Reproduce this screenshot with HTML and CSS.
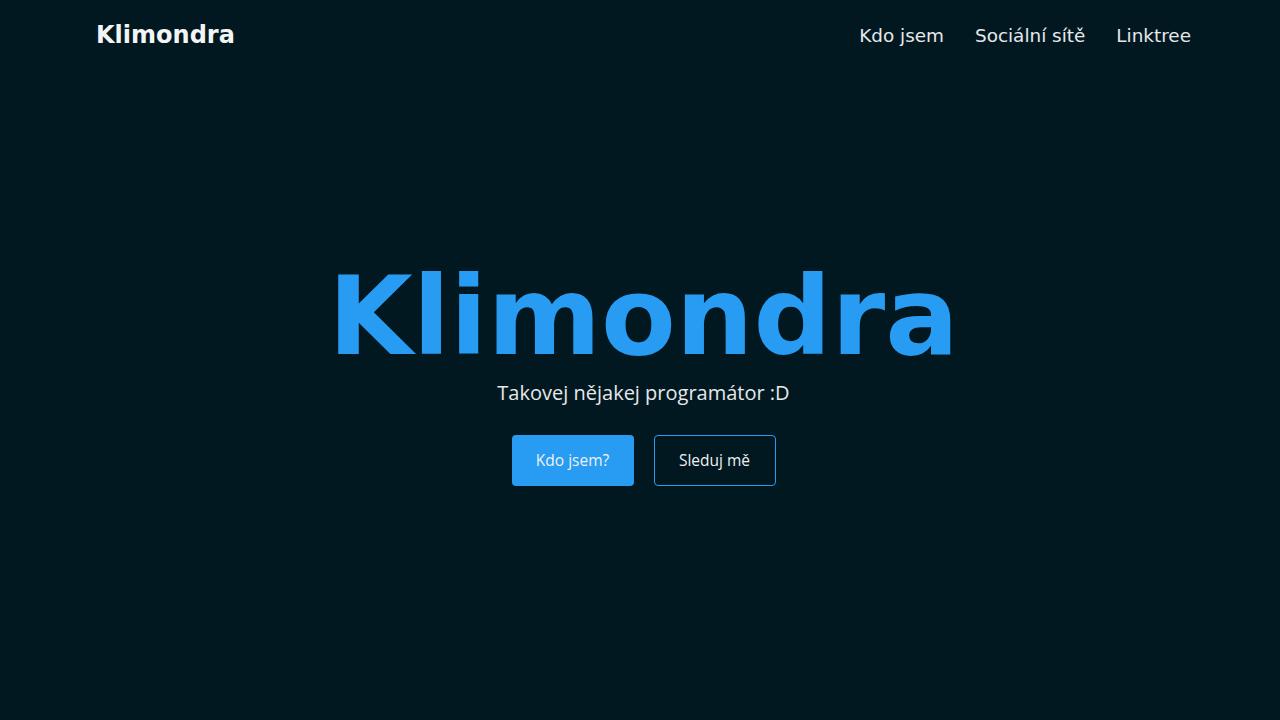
FILE: index.html
```html
<!DOCTYPE html>
<html lang="cs">
<head>
<meta charset="utf-8">
<title>Klimondra</title>
<link rel="stylesheet" href="styles.css">
</head>
<body>
<header class="header">
  <a class="logo" href="#">Klimondra</a>
  <nav class="nav">
    <a href="#">Kdo jsem</a>
    <a href="#">Sociální sítě</a>
    <a href="#">Linktree</a>
  </nav>
</header>
<main class="hero">
  <h1 class="title">Klimondra</h1>
  <p class="subtitle">Takovej nějakej programátor :D</p>
  <div class="actions">
    <a class="btn btn-primary" href="#">Kdo jsem?</a>
    <a class="btn btn-outline" href="#">Sleduj mě</a>
  </div>
</main>
</body>
</html>
```
FILE: styles.css
```css
html, body { margin: 0; padding: 0; }
body {
  background: #011821;
  color: #e8eaec;
  font-family: "DejaVu Sans", sans-serif;
  height: 720px;
  overflow: hidden;
}
a { text-decoration: none; color: inherit; }
.header {
  display: flex;
  justify-content: space-between;
  align-items: center;
  padding: 0 89px 0 96px;
  height: 70px;
}
.logo { font-weight: bold; font-size: 24px; color: #f2f4f5; }
.nav { display: flex; gap: 31px; font-size: 18.4px; }
.nav a { color: #e6e8ea; }
.hero {
  display: flex;
  flex-direction: column;
  align-items: center;
  padding: 182px 0 0 7px;
}
.title {
  margin: 0;
  font-size: 109px;
  line-height: 1.2;
  font-weight: bold;
  color: #279cf2;
}
.subtitle {
  margin: -4px 0 0;
  font-family: "Open Sans", sans-serif;
  font-size: 20px;
  color: #e6e8ea;
}
.actions { display: flex; gap: 20px; margin-top: 29px; }
.btn {
  display: flex;
  align-items: center;
  justify-content: center;
  width: 122px;
  height: 51px;
  box-sizing: border-box;
  border-radius: 4px;
  font-family: "Open Sans", sans-serif;
  font-size: 15.5px;
  color: #eef0f2;
}
.btn-primary { background: #279cf2; }
.btn-outline { border: 1px solid #279cf2; }
```
